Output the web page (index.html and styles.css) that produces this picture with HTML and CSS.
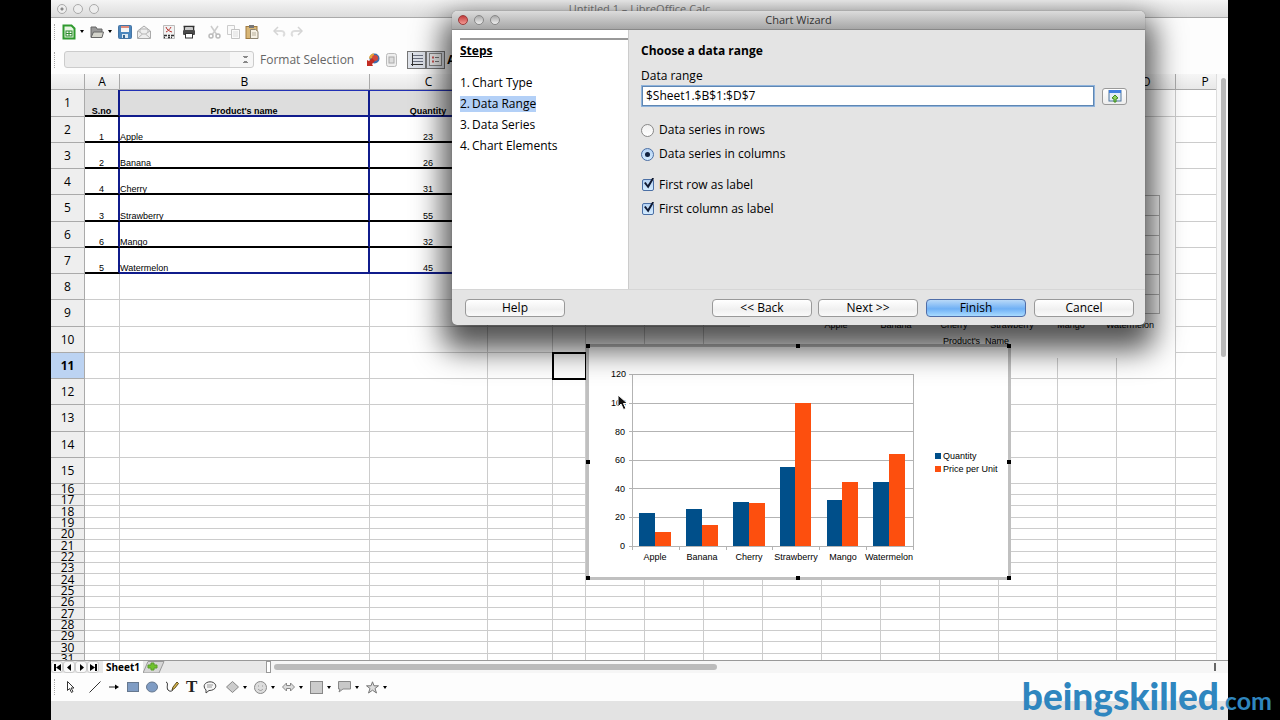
FILE: index.html
```html
<!DOCTYPE html>
<html lang="en">
<head>
<meta charset="utf-8">
<title>Untitled 1 – LibreOffice Calc</title>
<link rel="stylesheet" href="styles.css">
</head>
<body>
<main class="app">
  <header class="titlebar">
    <span class="lights"><i class="light dot"></i><i class="light"></i><i class="light"></i></span>
    <h1 class="app-title">Untitled 1 – LibreOffice Calc</h1>
  </header>

  <div class="toolbar main-tools">
    <i class="grip"></i>
    <button class="tool has-menu" aria-label="New"><svg width="14" height="16" viewBox="0 0 14 16"><path d="M1.500 1.500h8l3 3v10h-11z" fill="#e6f5e2" stroke="#2f9a2f" stroke-width="2"/><rect x="4" y="7" width="6" height="5" fill="#fff" stroke="#2b8a2b"/><path d="M4 9.500h6M7 7v5" stroke="#2b8a2b"/></svg></button>
    <button class="tool has-menu" aria-label="Open"><svg width="14" height="14" viewBox="0 0 14 14"><path d="M1 12V2h5l1 2h5v3" fill="#999" stroke="#666"/><path d="M1 12.500 3.500 7H13.500l-1.500 5.500z" fill="#d4d4cc" stroke="#666"/></svg></button>
    <button class="tool save" aria-label="Save"><svg width="14" height="14" viewBox="0 0 14 14"><rect x=".5" y=".5" width="13" height="13" rx="1" fill="#4b86bd" stroke="#4674a3"/><path d="M3 1h8v6H3z" fill="#f5f5f5"/><path d="M3 1h8v2H3z" fill="#e08b7a"/><path d="M4 9h6v4H4z" fill="#dce8f2"/><path d="M5 10h2v3H5z" fill="#34648f"/></svg></button>
    <button class="tool mail" aria-label="E-mail"><svg width="14" height="14" viewBox="0 0 14 14"><path d="M.5 6 7 1l6.500 5v7.500H.5z" fill="#eee" stroke="#aaa"/><path d="m1 13 4.500-4h3L13 13M1 6l4.500 3M13 6 8.500 9M3 7V4h8v3" fill="none" stroke="#b5b5b5"/></svg></button>
    <button class="tool pdf" aria-label="Export as PDF"><svg width="12" height="14" viewBox="0 0 12 14"><path d="M.5.5h11v13H.5z" fill="#f2f2f2" stroke="#bbb"/><path d="M3 2c1 3 3 4 6 5M8 2C7 4 5 6 3 7" stroke="#b5322e" fill="none"/><path d="M1 10.500h3M5 10.500h2M8 10.500h3M1 12.500h1M5 12.500h2M8 12.500h1" stroke="#333" stroke-width="1.500"/></svg></button>
    <button class="tool print" aria-label="Print"><svg width="14" height="14" viewBox="0 0 14 14"><path d="M1.500 1.500h11M2.500 1v4M11.500 1v4" stroke="#333" stroke-width="1.500"/><path d="M4 4h6" stroke="#999"/><rect x="1" y="5" width="12" height="5" rx="1" fill="#4a4a4a"/><rect x="3.500" y="8.500" width="7" height="4.500" fill="#fff" stroke="#333"/></svg></button>
    <button class="tool cut" aria-label="Cut"><svg width="13" height="14" viewBox="0 0 13 14"><path d="m3 1 6 9M10 1 4 10" stroke="#ccc" stroke-width="1.500"/><circle cx="3" cy="11" r="2" fill="none" stroke="#bbb" stroke-width="1.500"/><circle cx="10" cy="11" r="2" fill="none" stroke="#bbb" stroke-width="1.500"/></svg></button>
    <button class="tool copy" aria-label="Copy"><svg width="13" height="14" viewBox="0 0 13 14"><path d="M.5.5h7v9h-7z" fill="#fafafa" stroke="#ccc"/><path d="M4.500 4.500h8v9h-8z" fill="#fafafa" stroke="#c4c4c4"/><path d="M6 7h5M6 9h5M6 11h5" stroke="#ddd"/></svg></button>
    <button class="tool" aria-label="Paste"><svg width="14" height="14" viewBox="0 0 14 14"><rect x="1" y="1.500" width="11" height="12" fill="#d8b676" stroke="#9f7a40"/><rect x="4" y="0" width="5" height="3" fill="#777"/><path d="M5.500 4.500h5l2.500 2v7H5.500z" fill="#f5f0e4" stroke="#8d8573"/><path d="M7 8h4M7 10h4" stroke="#b9b19d"/></svg></button>
    <button class="tool undo" aria-label="Undo"><svg width="13" height="12" viewBox="0 0 13 12"><path d="M2 5h6c4 0 4 4 2 5" fill="none" stroke="#ddd" stroke-width="2"/><path d="M5 1 1 5l4 4" fill="none" stroke="#d4d4d4" stroke-width="1.500"/></svg></button>
    <button class="tool" aria-label="Redo"><svg width="13" height="12" viewBox="0 0 13 12"><path d="M11 5H5C1 5 1 9 3 10" fill="none" stroke="#ddd" stroke-width="2"/><path d="m8 1 4 4-4 4" fill="none" stroke="#d4d4d4" stroke-width="1.500"/></svg></button>
  </div>

  <div class="toolbar chart-tools">
    <i class="grip"></i>
    <select class="element-select" aria-label="Chart element"><option></option></select>
    <button class="format-btn">Format Selection</button>
    <button class="tool type" aria-label="Chart Type"><svg width="14" height="14" viewBox="0 0 14 14"><circle cx="8.500" cy="5.500" r="5" fill="#3b6fb0"/><path d="M8 5.500V.5a5 5 0 0 0-5 5z" fill="#e5a23a"/><circle cx="9" cy="5" r="3" fill="#d3483a"/><path d="M1 13V7l2 1 3-3 3 3-3 3 1 2z" fill="#c22c22"/></svg></button>
    <button class="tool" aria-label="Data Table"><svg width="11" height="14" viewBox="0 0 11 14"><rect x=".5" y=".5" width="10" height="13" rx="2" fill="#eee" stroke="#bbb"/><rect x="3" y="4" width="5" height="6" fill="#ddd" stroke="#aaa"/></svg></button>
    <span class="toggles">
      <button class="toggle" aria-label="Horizontal Grids"><svg width="13" height="13" viewBox="0 0 13 13"><path d="M2.500 0v13M1 11.500h12" stroke="#333"/><path d="M3 2.500h10M3 5.500h10M3 8.500h10" stroke="#6a7080"/></svg></button>
      <button class="toggle" aria-label="Legend"><svg width="13" height="13" viewBox="0 0 13 13"><rect x=".5" y=".5" width="12" height="12" fill="#f0f0f0" stroke="#888"/><path d="M3 4.500h2M3 8.500h2" stroke="#c55" stroke-width="2"/><path d="M6 4.500h4M6 8.500h4" stroke="#777"/></svg></button>
    </span>
    <button class="scale-btn" aria-label="Scale Text">A</button>
  </div>

  <section class="sheet">
    <div class="grid-area">
      <table class="grid">
        <colgroup><col class="w-head"><col class="w-a"><col class="w-b"><col class="w-c"><col class="w-d"><col class="w-e"><col class="w-n"><col class="w-n"><col class="w-n"><col class="w-n"><col class="w-n"><col class="w-n"><col class="w-n"><col class="w-n"><col class="w-n"><col class="w-n"><col class="w-n"></colgroup>
        <thead><tr id="letters"><th></th></tr></thead>
        <tbody id="rows"></tbody>
      </table>

      <svg class="chart chart-back" width="425" height="241" viewBox="0 0 425 241">
        <rect width="425" height="241" fill="#fff"/>
        <g class="rules"><path d="M60 78.500h350M60 98.500h350M60 118.500h350M60 137.500h350M60 157.500h350M60 177.500h350M60 196.500h350M409.500 78v118"/></g>
        <g class="mid"><text x="86" y="211">Apple</text><text x="146" y="211">Banana</text><text x="204" y="211">Cherry</text><text x="262" y="211">Strawberry</text><text x="321" y="211">Mango</text><text x="380" y="211">Watermelon</text><text x="226" y="227">Product's&#160; Name</text></g>
      </svg>

      <svg class="chart chart-front" width="425" height="236" viewBox="0 0 425 236">
        <rect x="1.500" y="1.500" width="422" height="233" fill="#fff" stroke="#c0c0c0" stroke-width="3"/>
        <g class="rules"><path d="M43 30.500h284M43 59.500h284M43 87.500h284M43 116.500h284M43 144.500h284M43 173.500h284M43 202.500h284M46.500 30v176M327.500 30v176M93.500 202v4M140.500 202v4M186.500 202v4M233.500 202v4M280.500 202v4"/></g>
        <g fill="#004f8a"><rect x="53" y="169" width="16" height="33"/><rect x="100" y="165" width="16" height="37"/><rect x="147" y="158" width="16" height="44"/><rect x="194" y="123" width="16" height="79"/><rect x="241" y="156" width="16" height="46"/><rect x="287" y="138" width="16" height="64"/><rect x="349" y="109" width="6" height="6"/></g>
        <g fill="#fd4f0e"><rect x="69" y="188" width="16" height="14"/><rect x="116" y="181" width="16" height="21"/><rect x="163" y="159" width="16" height="43"/><rect x="209" y="59" width="16" height="143"/><rect x="256" y="138" width="16" height="64"/><rect x="303" y="110" width="16" height="92"/><rect x="349" y="122" width="6" height="6"/></g>
        <g class="end"><text x="40" y="33">120</text><text x="40" y="62">100</text><text x="39" y="91">80</text><text x="39" y="119">60</text><text x="39" y="148">40</text><text x="39" y="176">20</text><text x="39" y="205">0</text></g>
        <g class="mid"><text x="69" y="216">Apple</text><text x="116" y="216">Banana</text><text x="163" y="216">Cherry</text><text x="210" y="216">Strawberry</text><text x="257" y="216">Mango</text><text x="303" y="216">Watermelon</text></g>
        <text x="357" y="115">Quantity</text><text x="357" y="128">Price per Unit</text>
        <g fill="#000"><path d="M0 0h4v4H0zM210 0h4v4h-4zM421 0h4v4h-4zM0 116h4v4H0zM421 116h4v4h-4zM0 232h4v4H0zM210 232h4v4h-4zM421 232h4v4h-4z"/></g>
      </svg>
    </div>
    <div class="vscroll"><i class="vthumb"></i></div>
  </section>

  <nav class="tabs">
    <button class="nav" aria-label="First sheet"><svg width="7" height="7" viewBox="0 0 7 7"><path d="M0 0h2v7H0zM7 0v7L2 3.500z"/></svg></button>
    <button class="nav" aria-label="Previous sheet"><svg width="7" height="7" viewBox="0 0 7 7"><path d="M5 0v7L1 3.500z"/></svg></button>
    <button class="nav" aria-label="Next sheet"><svg width="7" height="7" viewBox="0 0 7 7"><path d="M2 0v7l4-3.500z"/></svg></button>
    <button class="nav" aria-label="Last sheet"><svg width="7" height="7" viewBox="0 0 7 7"><path d="M0 0v7l5-3.500zM5 0h2v7H5z"/></svg></button>
    <button class="tab">Sheet1</button>
    <button class="add-tab" aria-label="Add sheet"><svg width="22" height="12" viewBox="0 0 22 12"><path d="M0 12 5 .5h16L16 12z" fill="#d6d6d6" stroke="#999"/><path d="M8 2h3v2h3v3h-3v2H8V7H5V4h3z" fill="#6fc32c" stroke="#5a9c2a"/></svg></button>
    <i class="splitter"></i>
    <div class="hscroll"><i class="hthumb"></i><i class="end-mark"></i></div>
  </nav>

  <div class="toolbar draw-tools">
    <i class="grip"></i>
    <button class="tool" aria-label="Select"><svg width="12" height="14" viewBox="0 0 12 14"><path d="M3.500 1.500v9l2-2 2 4 1.500-1-2-3.500h3z" fill="#fff" stroke="#333"/></svg></button>
    <button class="tool line" aria-label="Line"><svg width="12" height="12" viewBox="0 0 12 12"><path d="M.5 11.500 11.500.5" stroke="#333"/></svg></button>
    <button class="tool" aria-label="Arrow"><svg width="12" height="12" viewBox="0 0 12 12"><path d="M1 6h7" stroke="#222"/><path d="M7 3.500 11 6 7 8.500z"/></svg></button>
    <button class="tool" aria-label="Rectangle"><svg width="12" height="12" viewBox="0 0 12 12"><rect x=".5" y="1.500" width="11" height="9" fill="#7f9cc4" stroke="#66788f"/></svg></button>
    <button class="tool" aria-label="Ellipse"><svg width="12" height="12" viewBox="0 0 12 12"><ellipse cx="6" cy="6" rx="5.500" ry="5" fill="#7f9cc4" stroke="#66788f"/></svg></button>
    <button class="tool" aria-label="Freeform"><svg width="14" height="12" viewBox="0 0 14 12"><path d="M1 1c3 1 0 5 2 8 2 2 4 1 5 0" fill="none" stroke="#222"/><path d="m7 9 1-3 4-5 1.500 1.500-4 5z" fill="#d9b84a" stroke="#5a4a20"/></svg></button>
    <button class="tool glyph" aria-label="Text">T</button>
    <button class="tool" aria-label="Callout"><svg width="14" height="13" viewBox="0 0 14 13"><path d="M3 12V9C-1 5 2 1 7 .8c5 0 7 4 5 6.500C10 9.500 7 9.500 6 9.500z" fill="#f6f6f6" stroke="#444"/><path d="M4 4h6M4 6h5" stroke="#999"/></svg></button>
    <button class="tool has-menu shapes" aria-label="Basic Shapes"><svg width="13" height="12" viewBox="0 0 13 12"><path d="M6.500.5 12.500 6l-6 5.500L.5 6z" fill="#ccc" stroke="#888"/></svg></button>
    <button class="tool has-menu" aria-label="Symbol Shapes"><svg width="13" height="13" viewBox="0 0 13 13"><circle cx="6.500" cy="6.500" r="6" fill="#ddd" stroke="#888"/><path d="M4 5h1M8 5h1M4 8c2 2 3 2 5 0" fill="none" stroke="#999"/></svg></button>
    <button class="tool has-menu" aria-label="Block Arrows"><svg width="13" height="12" viewBox="0 0 13 12"><path d="m.5 6 4-4v2.500h4V2l4 4-4 4V7.500h-4V10z" fill="#ddd" stroke="#888"/></svg></button>
    <button class="tool has-menu" aria-label="Flowcharts"><svg width="13" height="13" viewBox="0 0 13 13"><rect x=".5" y=".5" width="12" height="12" fill="#ccc" stroke="#888"/></svg></button>
    <button class="tool has-menu" aria-label="Callouts"><svg width="13" height="12" viewBox="0 0 13 12"><path d="M.5.5h12v7.500H5l-4 3 1-3H.5z" fill="#c8c8c8" stroke="#888"/></svg></button>
    <button class="tool has-menu" aria-label="Stars"><svg width="13" height="13" viewBox="0 0 13 13"><path d="m6.500.8 1.500 4h4.500L9 7.500l1.500 4.500-4-2.800L2.500 12 4 7.500.5 4.800H5z" fill="#ddd" stroke="#777"/></svg></button>
  </div>
  <footer class="status"></footer>

  <section class="dialog" role="dialog" aria-labelledby="dlg-title">
    <header class="dialog-bar">
      <span class="lights"><i class="light red"></i><i class="light gray"></i><i class="light gray"></i></span>
      <h2 class="dialog-title" id="dlg-title">Chart Wizard</h2>
    </header>
    <div class="dialog-body">
      <aside class="steps">
        <h3 class="steps-title">Steps</h3>
        <ol class="step-list">
          <li><span class="step"><b>1.</b>Chart Type</span></li>
          <li><span class="step current"><b>2.</b>Data Range</span></li>
          <li><span class="step"><b>3.</b>Data Series</span></li>
          <li><span class="step"><b>4.</b>Chart Elements</span></li>
        </ol>
      </aside>
      <form class="panel">
        <h3 class="panel-title">Choose a data range</h3>
        <label class="field-label" for="range">Data range</label>
        <div class="field">
          <input class="range" id="range" type="text" value="$Sheet1.$B$1:$D$7">
          <button class="pick" type="button" aria-label="Select data range"><svg width="14" height="14" viewBox="0 0 14 14"><rect x="1" y="1.500" width="12" height="10.500" fill="#e3edf7" stroke="#51779e"/><path d="M1 1h12v3H1z" fill="#3f7fe0"/><path d="M7 6 10 9 8 10v3H6v-3L4 9z" fill="#8fd060" stroke="#3d8a1e"/></svg></button>
        </div>
        <div class="choices">
          <label class="choice"><input class="radio" type="radio" name="series">Data series in rows</label>
          <label class="choice"><input class="radio" type="radio" name="series" checked>Data series in columns</label>
        </div>
        <div class="choices">
          <label class="choice"><input class="check" type="checkbox" checked>First row as label</label>
          <label class="choice"><input class="check" type="checkbox" checked>First column as label</label>
        </div>
      </form>
    </div>
    <footer class="dialog-foot">
      <button class="btn">Help</button>
      <div class="foot-right">
        <div class="pair"><button class="btn">&lt;&lt; Back</button><button class="btn">Next &gt;&gt;</button></div>
        <button class="btn primary">Finish</button>
        <button class="btn">Cancel</button>
      </div>
    </footer>
  </section>

  <svg class="pointer" width="12" height="17" viewBox="0 0 12 17"><path d="M1 1v12l3-3 2.500 5.500L9 14.500 6.500 9.500h4z" fill="#111" stroke="#fff"/></svg>
</main>
<div class="brand">beingskilled<span class="brand-tld">.com</span></div>
<script src="grid.js"></script>
</body>
</html>
```

FILE: styles.css
```css
* { box-sizing: border-box; }
body {
  margin: 0;
  padding: 0 52px 0 51px;
  background: #000;
  color: #000;
  font: 12px/16px "Open Sans", "Noto Sans", sans-serif;
  overflow: hidden;
}
button, input, select { font: inherit; color: inherit; margin: 0; }
button { padding: 0; border: 0; background: none; }
h1, h2, h3, ol { margin: 0; padding: 0; font-size: inherit; }
svg { display: block; }

.app {
  position: relative;
  display: flex;
  flex-direction: column;
  height: 100vh;
  background: #fdfdfd;
  overflow: hidden;
}

/* Window title bars */
.titlebar, .dialog-bar { position: relative; display: flex; align-items: center; justify-content: center; }
.titlebar { height: 18px; background: linear-gradient(#f4f4f4, #dcdcdc); border-bottom: 1px solid #aaa; }
.app-title { font-weight: 400; color: #777; font-size: 11px; }
.lights { position: absolute; left: 6px; display: flex; gap: 6px; }
.light { width: 10px; height: 10px; border: 1px solid #aaa; border-radius: 50%; background: #eee; }
.light.dot { background: radial-gradient(#888 0 1px, #eee 2px); }
.light.gray { border-color: #888; background: linear-gradient(#aaa, #eee); }
.light.red { border-color: #9c3b3b; background: linear-gradient(#c23c3c, #f49a94); }

/* Toolbars */
.toolbar { display: flex; align-items: center; }
.main-tools { height: 27px; }
.chart-tools { height: 29px; }
.draw-tools { height: 28px; gap: 7px; }
.grip { width: 1px; height: 16px; margin: 0 7px 0 3px; border-left: 1px dotted #aaa; }
.draw-tools .grip { margin-right: 2px; }
.tool { display: flex; align-items: center; flex: none; }
.has-menu::after {
  content: "";
  margin: 0 6px 0 4px;
  border: 2px solid transparent;
  border-top: 3px solid #000;
  border-bottom: 0;
}
.draw-tools .has-menu::after { margin-right: 0; }
.mail { margin: 0 12px 0 5px; }
.print { margin: 0 12px 0 7px; }
.copy { margin: 0 5px 0 6px; }
.undo { margin: 0 4px 0 14px; }
.element-select {
  width: 190px;
  height: 17px;
  margin-left: 2px;
  border: 1px solid #ccc;
  border-radius: 3px;
  appearance: none;
  background:
    conic-gradient(from 135deg at 50% 0, #888 90deg, transparent 0) right 5px bottom 4px / 6px 3px no-repeat,
    conic-gradient(from -45deg at 50% 100%, #888 90deg, transparent 0) right 5px top 4px / 6px 3px no-repeat,
    linear-gradient(90deg, #ebebeb 88%, #f6f6f6 88%);
}
.format-btn { margin: 0 12px 0 6px; color: #666; white-space: nowrap; }
.type { margin-right: 6px; }
.toggles { display: flex; margin-left: 10px; }
.toggle { display: grid; place-items: center; width: 19px; height: 18px; border: 1px solid #777; background: #dfe3ea; }
.scale-btn { margin-left: 2px; font-weight: 700; }
.draw-tools .line { margin-left: 6px; }
.draw-tools .shapes { margin-left: 2px; }
.glyph { font: 700 17px/18px "Liberation Serif", serif; color: #222; width: 10px; }

/* Spreadsheet */
.sheet { display: flex; flex: 1; min-height: 0; }
.grid-area { position: relative; flex: 1; min-width: 0; overflow: hidden; background: #fff; }
.grid { width: 100%; table-layout: fixed; border-collapse: separate; border-spacing: 0; }
.w-head { width: 34px; }
.w-a { width: 35px; }
.w-b { width: 250px; }
.w-c { width: 118px; }
.w-d { width: 65px; }
.w-e { width: 33px; }
.w-n { width: 59px; }
.grid th, .grid td { padding: 0; border: 0 solid #ccc; border-width: 0 1px 1px 0; }
.grid th { background: #eee; border-color: #aaa; font-weight: 400; line-height: 10px; vertical-align: middle; }
.grid thead th { height: 16px; background: linear-gradient(#f6f6f6, #e8e8e8); }
.grid td { font: 9px/7px "Liberation Sans", Arial, sans-serif; vertical-align: bottom; text-align: center; }
.grid .tall { height: 26px; }
.grid .tall.plus { height: 27px; }
.grid .short { height: 11px; }
.grid .short.plus { height: 12px; }
.grid .active { background: #bcd3f2; font-weight: 700; }
.grid .data td:nth-child(2) { border-bottom: 2px solid #000; }
.grid .data td:nth-child(3), .grid .data td:nth-child(4) { border-bottom: 2px solid #000; border-right: 2px solid #101c8c; }
.grid .data td:nth-child(2) { border-right: 2px solid #101c8c; }
.grid .data td:nth-child(3) { text-align: left; }
.grid .first td:nth-child(-n+4) { background: #ddd; font-weight: 700; }
.grid .first td:nth-child(3), .grid .first td:nth-child(4) { text-align: center; border-top: 1px solid #2231b5; border-bottom-color: #101c8c; }
.grid .last td:nth-child(3), .grid .last td:nth-child(4) { border-bottom-color: #101c8c; }
.grid .cursor { outline: 2px solid #000; outline-offset: -1px; }

.vscroll { width: 12px; padding: 4px 2px 0 4px; background: #f8f8f8; border-left: 1px solid #ddd; }
.vthumb { display: block; height: 48%; border-radius: 3px; background: #b8b8b8; }

/* Charts floating over the cells */
.chart { position: absolute; font: 9px "Liberation Sans", Arial, sans-serif; }
.chart-back { left: 699px; top: 43px; }
.chart-front { left: 535px; top: 270px; }
.rules { fill: none; stroke: #b3b3b3; }
.mid { text-anchor: middle; }
.end { text-anchor: end; }

/* Sheet tabs and horizontal scroll */
.tabs { display: flex; align-items: stretch; height: 13px; background: #e8e8e8; border-top: 1px solid #999; }
.nav { display: grid; place-items: center; width: 12px; border: 1px solid #ccc; border-radius: 3px; background: #fafafa; }
.tab { padding: 0 3px; margin-left: 4px; background: #fff; font-size: 10px; line-height: 11px; font-weight: 700; }
.splitter { width: 5px; margin-left: 101px; border: 1px solid #999; background: #fff; }
.hscroll { display: flex; align-items: center; flex: 1; padding: 0 12px 0 3px; background: #f6f6f6; }
.hthumb { width: 47%; height: 6px; border-radius: 3px; background: #bbb; }
.end-mark { width: 2px; height: 8px; margin-left: auto; background: #666; }

.status { height: 19px; background: #e3e3e3; }

/* Chart wizard */
.dialog {
  position: absolute;
  left: 401px;
  top: 11px;
  width: 693px;
  border-radius: 5px;
  background: #e4e4e4;
  box-shadow: 0 0 1px #555, 0 16px 30px 9px rgba(0, 0, 0, .68);
}
.dialog-bar { height: 19px; border-radius: 5px 5px 0 0; background: linear-gradient(#dcdcdc, #a6a6a6); border-bottom: 1px solid #888; }
.dialog-title { font-weight: 400; font-size: 11px; color: #333; }
.dialog-body { display: flex; height: 260px; border-bottom: 1px solid #d6d6d6; }
.steps { width: 177px; padding: 8px 0 0 8px; background: #fff; border-right: 1px solid #ccc; }
.steps-title { padding-top: 3px; border-top: 2px solid #999; text-decoration: underline; }
.step-list { padding-top: 14px; list-style: none; }
.step-list li { height: 21px; padding-top: 2px; }
.step { display: inline-flex; gap: 2px; }
.step b { font-weight: 400; }
.current { background: #b3d0f7; }
.panel { flex: 1; padding: 13px 18px 0 12px; }
.panel-title { margin-bottom: 9px; }
.field-label { display: block; margin-bottom: 2px; }
.field { display: flex; align-items: center; gap: 8px; margin-bottom: 16px; }
.range {
  flex: 1;
  min-width: 0;
  height: 20px;
  margin-left: 1px;
  padding: 0 3px 2px;
  border: 1px solid #5f87b3;
  outline: 0;
  background: #fff;
  box-shadow: 0 0 0 1px #8fb3dc;
}
.pick { display: grid; place-items: center; width: 25px; height: 17px; border: 1px solid #999; border-radius: 3px; background: linear-gradient(#fff, #eee); }
.choices { display: grid; gap: 8px; margin-bottom: 15px; }
.choice { display: flex; align-items: center; gap: 5px; }
.radio, .check { display: grid; place-items: center; width: 13px; height: 13px; appearance: none; border: 1px solid #888; background: linear-gradient(#f0f0f0, #fff); }
.radio { border-radius: 50%; }
.check { width: 12px; height: 12px; margin-left: 1px; border-radius: 2px; }
.radio:checked, .check:checked { border-color: #4a6fa5; background: linear-gradient(#b5d2f3, #d3ebff); }
.radio:checked::after { content: ""; width: 5px; height: 5px; border-radius: 50%; background: #10213f; }
.check:checked::after {
  content: "";
  width: 10px;
  height: 11px;
  margin: -4px 0 0 1px;
  background: #101a33;
  clip-path: polygon(0 50%, 17% 42%, 38% 68%, 85% 0, 100% 8%, 42% 100%);
}
.dialog-foot { display: flex; align-items: center; justify-content: space-between; height: 35px; padding: 0 11px 0 13px; }
.foot-right { display: flex; gap: 8px; }
.pair { display: flex; gap: 6px; }
.btn { width: 100px; height: 18px; border: 1px solid #999; border-radius: 4px; background: linear-gradient(#fff, #f0f0f0 60%, #fafafa); line-height: 16px; }
.primary { border-color: #4f6da8; background: linear-gradient(#b9d9f8, #6fb0f5 55%, #a8dbff); }

.pointer { position: absolute; left: 566px; top: 394px; }

/* Watermark over the lower right corner */
.brand {
  position: absolute;
  right: 8px;
  bottom: 0;
  color: #2f86bf;
  font: 900 37px/40px Lato, sans-serif;
}
.brand-tld { font-size: 25px; font-weight: 700; }
```

FILE: grid.js
```js
const data = [
  ["S.no", "Product's name", "Quantity"],
  ["1", "Apple", "23"],
  ["2", "Banana", "26"],
  ["4", "Cherry", "31"],
  ["3", "Strawberry", "55"],
  ["6", "Mango", "32"],
  ["5", "Watermelon", "45"]
];
const letters = "ABCDEFGHIJKLMNOP".split("");
const head = document.getElementById("letters");
letters.forEach(function (letter) {
  const th = document.createElement("th");
  th.textContent = letter;
  head.appendChild(th);
});
const body = document.getElementById("rows");
for (let r = 1; r <= 31; r++) {
  const tr = document.createElement("tr");
  const tall = r <= 15;
  tr.className = tall ? "tall" : "short";
  if (tall ? r % 4 === 1 : r % 3 === 0) tr.classList.add("plus");
  if (r <= 7) tr.classList.add("data");
  if (r === 1) tr.classList.add("first");
  if (r === 7) tr.classList.add("last");
  const th = document.createElement("th");
  th.textContent = r;
  if (r === 11) th.className = "active";
  tr.appendChild(th);
  letters.forEach(function (letter, c) {
    const td = document.createElement("td");
    td.textContent = (data[r - 1] || [])[c] || "";
    if (r === 11 && letter === "E") td.className = "cursor";
    tr.appendChild(td);
  });
  body.appendChild(tr);
}
```
